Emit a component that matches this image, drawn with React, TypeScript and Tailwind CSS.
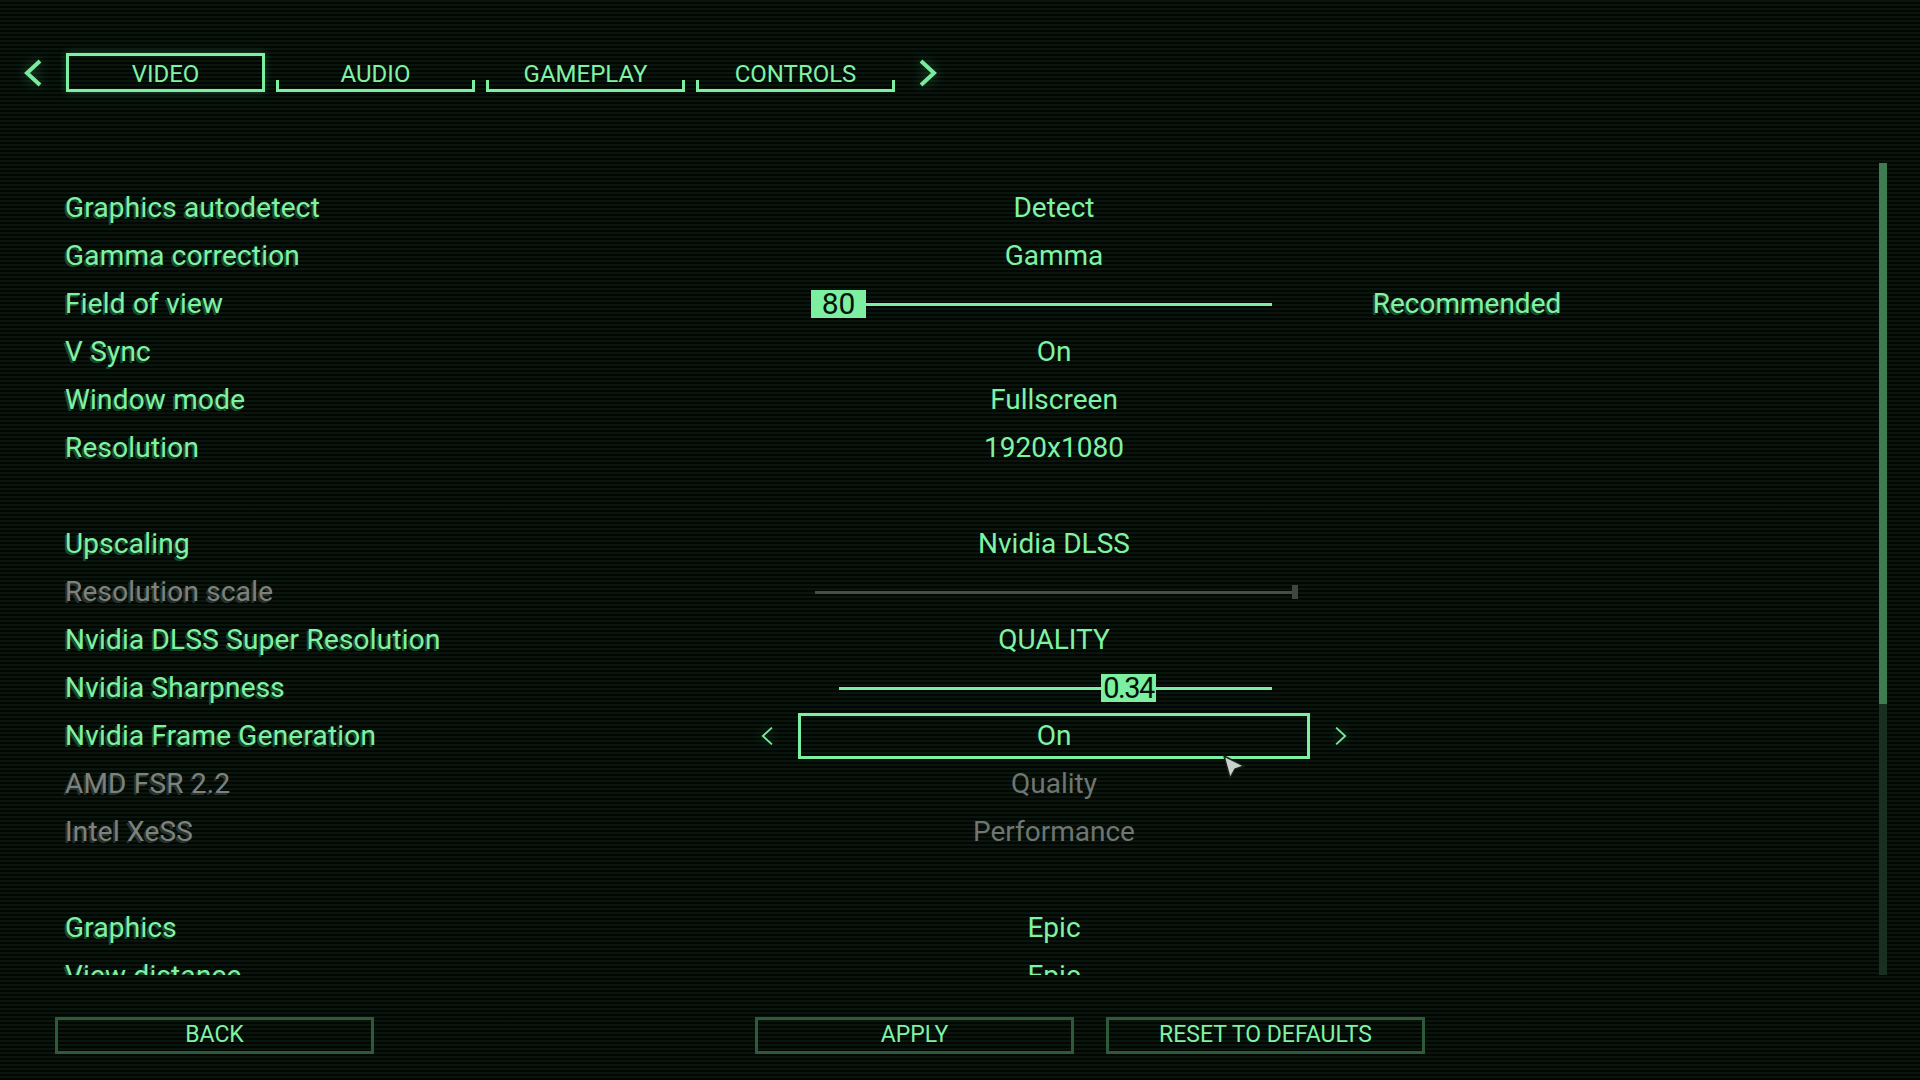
import type { ReactNode } from 'react'

type Row =
  | { kind: 'text'; label: string; value: string; disabled?: boolean; extra?: string }
  | { kind: 'slider'; label: string; value: string; disabled?: boolean; extra?: string; variant: 'fov' | 'scale' | 'sharp' }
  | { kind: 'select'; label: string; value: string }
  | { kind: 'gap' }

const rows: Row[] = [
  { kind: 'text', label: 'Graphics autodetect', value: 'Detect' },
  { kind: 'text', label: 'Gamma correction', value: 'Gamma' },
  { kind: 'slider', label: 'Field of view', value: '80', variant: 'fov', extra: 'Recommended' },
  { kind: 'text', label: 'V Sync', value: 'On' },
  { kind: 'text', label: 'Window mode', value: 'Fullscreen' },
  { kind: 'text', label: 'Resolution', value: '1920x1080' },
  { kind: 'gap' },
  { kind: 'text', label: 'Upscaling', value: 'Nvidia DLSS' },
  { kind: 'slider', label: 'Resolution scale', value: '', variant: 'scale', disabled: true },
  { kind: 'text', label: 'Nvidia DLSS Super Resolution', value: 'QUALITY' },
  { kind: 'slider', label: 'Nvidia Sharpness', value: '0.34', variant: 'sharp' },
  { kind: 'select', label: 'Nvidia Frame Generation', value: 'On' },
  { kind: 'text', label: 'AMD FSR 2.2', value: 'Quality', disabled: true },
  { kind: 'text', label: 'Intel XeSS', value: 'Performance', disabled: true },
  { kind: 'gap' },
  { kind: 'text', label: 'Graphics', value: 'Epic' },
  { kind: 'text', label: 'View distance', value: 'Epic' },
  { kind: 'text', label: 'Shadows', value: 'Epic' },
]

const tabs = ['VIDEO', 'AUDIO', 'GAMEPLAY', 'CONTROLS']

function Chevron({ dir, thin }: { dir: 'left' | 'right'; thin?: boolean }) {
  const d = dir === 'left' ? 'M17 2 L4 14 L17 26' : 'M3 2 L16 14 L3 26'
  return (
    <svg width={thin ? 14 : 20} height={thin ? 22 : 28} viewBox="0 0 20 28" className="drop-shadow-[0_0_6px_rgba(110,240,150,0.35)]">
      <path d={d} fill="none" stroke="#79eb9c" strokeWidth={thin ? 2.6 : 4} strokeLinejoin="miter" />
    </svg>
  )
}

function Slider({ variant, value }: { variant: 'fov' | 'scale' | 'sharp'; value: string }) {
  if (variant === 'scale') {
    return (
      <div className="w-full">
        <div className="ml-[17px] flex h-[14px] w-[483px] items-center">
          <div className="h-[3px] flex-1 bg-[#474c48]" />
          <div className="h-[14px] w-[6px] bg-[#3f4540]" />
        </div>
      </div>
    )
  }
  if (variant === 'fov') {
    return (
      <div className="w-full">
        <div className="ml-[13px] flex w-[461px] items-center">
          <div className="flex h-[28px] w-[55px] items-center justify-center bg-[#7cf0a0] text-[30px] leading-none text-[#06110a]">
            {value}
          </div>
          <div className="h-[3px] flex-1 bg-[#7cf0a0]" />
        </div>
      </div>
    )
  }
  return (
    <div className="w-full">
      <div className="ml-[41px] flex w-[433px] items-center">
        <div className="h-[3px] w-[262px] bg-[#7cf0a0]" />
        <div className="flex h-[28px] w-[55px] items-center justify-center bg-[#7cf0a0] text-[29px] leading-none tracking-[-1.5px] text-[#06110a]">
          {value}
        </div>
        <div className="h-[3px] flex-1 bg-[#7cf0a0]" />
      </div>
    </div>
  )
}

function SettingRow({ row }: { row: Row }) {
  if (row.kind === 'gap') return <div className="h-[48px]" />
  const dim = 'disabled' in row && row.disabled
  const labelCls = dim
    ? 'text-[#7c827e] [text-shadow:-2px_2px_0_#2a302b]'
    : 'text-[#80f2a4] [text-shadow:-2px_2px_0_#1d4a2b]'

  let value: ReactNode
  if (row.kind === 'slider') {
    value = <Slider variant={row.variant} value={row.value} />
  } else if (row.kind === 'select') {
    value = (
      <div className="relative flex w-full justify-center">
        <div className="absolute left-[-38px] top-[12px]">
          <Chevron dir="left" thin />
        </div>
        <div className="flex h-[46px] w-full items-center justify-center border-[3px] border-[#7cf0a0] text-[28px] text-[#80f2a4]">
          {row.value}
        </div>
        <div className="absolute right-[-38px] top-[12px]">
          <Chevron dir="right" thin />
        </div>
      </div>
    )
  } else {
    value = <span className={`text-[28px] ${dim ? 'text-[#6f7570]' : 'text-[#80f2a4]'}`}>{row.value}</span>
  }

  return (
    <div className="flex h-[48px] items-center">
      <div className={`w-[733px] text-[28px] tracking-[0.2px] ${labelCls}`}>{row.label}</div>
      <div className="flex w-[512px] items-center justify-center">{value}</div>
      {'extra' in row && row.extra ? (
        <div className="w-[314px] text-center text-[28px] text-[#80f2a4] [text-shadow:-2px_2px_0_#1d4a2b]">{row.extra}</div>
      ) : null}
    </div>
  )
}

export default function App() {
  return (
    <div className="relative h-[1080px] w-[1920px] overflow-hidden bg-[#040b07] font-['Roboto','Liberation_Sans',sans-serif]">
      {/* scanlines */}
      <div className="pointer-events-none absolute inset-0 bg-[repeating-linear-gradient(to_bottom,rgba(18,40,26,0.35)_0px,rgba(18,40,26,0.35)_2px,rgba(0,0,0,0.4)_2px,rgba(0,0,0,0.4)_4px)]" />

      <div className="relative flex h-full flex-col">
        {/* Tab bar */}
        <div className="mt-[53px] flex h-[39px] items-center pl-[23px]">
          <Chevron dir="left" />
          <div className="ml-[23px] flex gap-[11px]">
            {tabs.map((t, i) => (
              <div
                key={t}
                className={`relative flex h-[39px] w-[199px] items-center justify-center pt-[2px] text-[24px] text-[#80f2a4] ${
                  i === 0 ? 'border-[3px] border-[#7cf0a0] shadow-[0_0_8px_rgba(110,240,150,0.25)]' : ''
                }`}
              >
                {t}
                {i !== 0 && (
                  <div className="absolute inset-x-0 bottom-0 h-[12px] border-x-[3px] border-b-[3px] border-[#7cf0a0]" />
                )}
              </div>
            ))}
          </div>
          <div className="ml-[23px]">
            <Chevron dir="right" />
          </div>
        </div>

        {/* Settings list + scrollbar */}
        <div className="mt-[68px] flex h-[815px]">
          <div className="flex-1 overflow-hidden pl-[65px] pt-[24px]">
            {rows.map((r, i) => (
              <SettingRow key={i} row={r} />
            ))}
          </div>
          <div className="mr-[33px] mt-[3px] flex w-[8px] flex-col bg-[#17301f]">
            <div className="h-[541px] bg-[#3f7c52]" />
          </div>
        </div>

        {/* Footer buttons */}
        <div className="mt-[41px] flex h-[38px] pl-[55px] pt-[1px] text-[23px] text-[#80f2a4]">
          <div className="flex w-[319px] items-center justify-center border-[3px] border-[#2e5a3a]">BACK</div>
          <div className="ml-[381px] flex w-[319px] items-center justify-center border-[3px] border-[#2e5a3a]">APPLY</div>
          <div className="ml-[32px] flex w-[319px] items-center justify-center border-[3px] border-[#2e5a3a]">RESET TO DEFAULTS</div>
        </div>
      </div>

      {/* mouse pointer */}
      <svg className="absolute left-[1221px] top-[753px]" width="26" height="28" viewBox="0 0 26 28">
        <path d="M3 3 L23 13 L14 16 L9 25 Z" fill="#c9d1cb" stroke="#1a1f1b" strokeWidth="1.5" />
      </svg>
    </div>
  )
}
